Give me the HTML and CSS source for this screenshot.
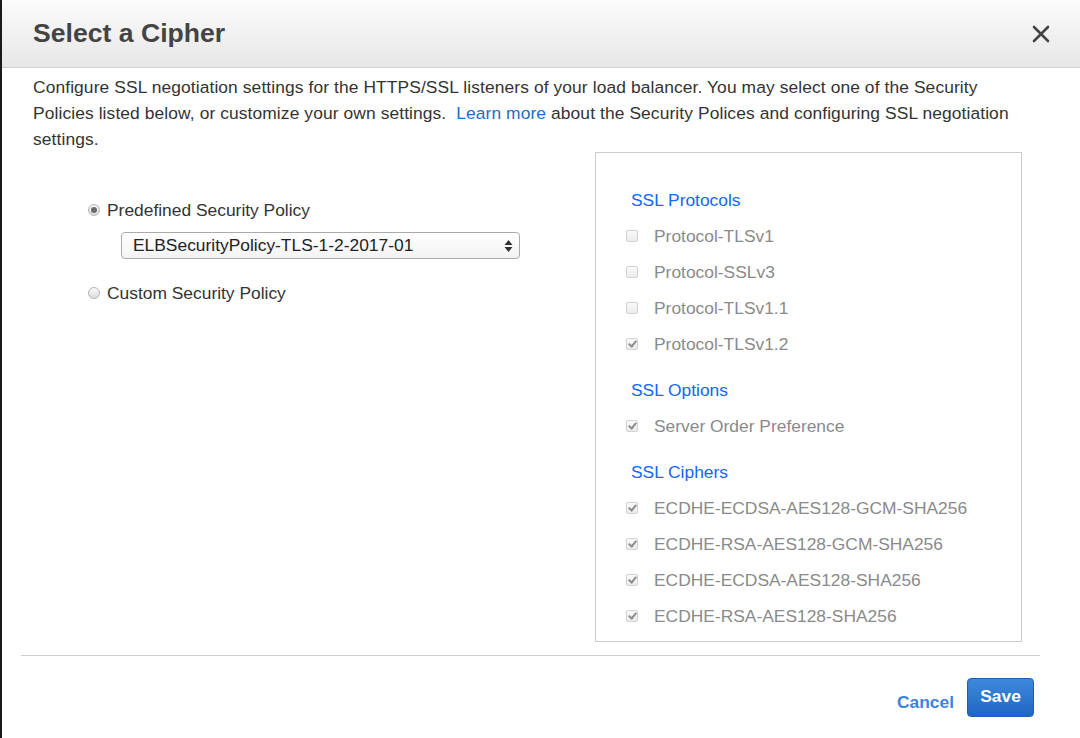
FILE: index.html
```html
<!DOCTYPE html>
<html>
<head>
<meta charset="utf-8">
<link rel="stylesheet" href="styles.css">
</head>
<body>
<div class="modal">
  <header class="modal-header">
    <h1 class="title">Select a Cipher</h1>
    <svg class="close" width="18" height="18" viewBox="0 0 18 18"><path d="M2 2 L16 16 M16 2 L2 16" stroke="#444" stroke-width="2.6" stroke-linecap="round"/></svg>
  </header>
  <div class="modal-body">
    <p class="desc">Configure SSL negotiation settings for the HTTPS/SSL listeners of your load balancer. You may select one of the Security Policies listed below, or customize your own settings.&nbsp; <a class="link">Learn more</a> about the Security Polices and configuring SSL negotiation settings.</p>
    <div class="columns">
      <div class="left">
        <div class="radio-row"><span class="radio checked"></span><span>Predefined Security Policy</span></div>
        <div class="select">
          <span>ELBSecurityPolicy-TLS-1-2-2017-01</span>
          <svg width="9" height="14" viewBox="0 0 9 14"><path d="M4.5 1 L8.5 6 L0.5 6 Z M0.5 8 L8.5 8 L4.5 13 Z" fill="#333"/></svg>
        </div>
        <div class="radio-row custom"><span class="radio"></span><span>Custom Security Policy</span></div>
      </div>
      <div class="panel">
        <div class="heading">SSL Protocols</div>
        <div class="item"><span class="cb"></span>Protocol-TLSv1</div>
        <div class="item"><span class="cb"></span>Protocol-SSLv3</div>
        <div class="item"><span class="cb"></span>Protocol-TLSv1.1</div>
        <div class="item"><span class="cb on"></span>Protocol-TLSv1.2</div>
        <div class="heading">SSL Options</div>
        <div class="item"><span class="cb on"></span>Server Order Preference</div>
        <div class="heading">SSL Ciphers</div>
        <div class="item"><span class="cb on"></span>ECDHE-ECDSA-AES128-GCM-SHA256</div>
        <div class="item"><span class="cb on"></span>ECDHE-RSA-AES128-GCM-SHA256</div>
        <div class="item"><span class="cb on"></span>ECDHE-ECDSA-AES128-SHA256</div>
        <div class="item"><span class="cb on"></span>ECDHE-RSA-AES128-SHA256</div>
      </div>
    </div>
  </div>
  <div class="divider"></div>
  <footer class="modal-footer">
    <a class="cancel">Cancel</a>
    <button class="save">Save</button>
  </footer>
</div>
</body>
</html>
```

FILE: styles.css
```css
* { box-sizing: border-box; }
html, body { margin: 0; padding: 0; background: #fff; }
body {
  font-family: "Liberation Sans", Arial, Helvetica, sans-serif;
  color: #333;
  width: 1080px;
  height: 738px;
  overflow: hidden;
}
.modal {
  height: 738px;
  border-left: 2px solid #1a1a1a;
}
.modal-header {
  height: 68px;
  background: linear-gradient(#fbfbfb, #e7e7e7);
  border-bottom: 1px solid #cfcfcf;
  display: flex;
  align-items: center;
  justify-content: space-between;
  padding: 0 30px 0 31px;
}
.title {
  margin: 0;
  font-size: 26.6px;
  font-weight: bold;
  color: #444;
}
.modal-body { padding: 0 0 0 31px; }
.desc {
  margin: 6px 0 0 0;
  font-size: 17.4px;
  line-height: 26px;
  letter-spacing: 0.1px;
  width: 990px;
  color: #333;
}
.link { color: #1a6ec8; }
.columns {
  display: grid;
  grid-template-columns: 562px 427px;
}
.left {
  padding: 46px 0 0 55px;
  font-size: 17.4px;
  color: #333;
}
.radio-row {
  display: flex;
  align-items: center;
  height: 24px;
  gap: 7px;
}
.radio-row.custom { margin-top: 22px; }
.radio {
  width: 12px;
  height: 12px;
  border-radius: 50%;
  border: 1px solid #b4b4b4;
  background: linear-gradient(#f8f8f8, #dcdcdc);
  display: inline-flex;
  align-items: center;
  justify-content: center;
}
.radio.checked::after {
  content: "";
  width: 6px;
  height: 6px;
  border-radius: 50%;
  background: #6a6a6a;
}
.select {
  margin: 10px 0 0 33px;
  width: 399px;
  height: 27px;
  border: 1px solid #aaa;
  border-radius: 4px;
  background: linear-gradient(#fff, #f3f3f3);
  display: flex;
  align-items: center;
  justify-content: space-between;
  padding: 0 6px 0 11px;
  font-size: 17.4px;
  color: #222;
}
.panel {
  border: 1px solid #ccc;
  height: 490px;
  padding: 19px 0 0 30px;
}
.heading {
  height: 36px;
  line-height: 36px;
  margin-top: 10px;
  padding-left: 5px;
  color: #1466f5;
  font-size: 17.4px;
}
.item {
  height: 36px;
  display: flex;
  align-items: center;
  gap: 16px;
  font-size: 17.4px;
  color: #8a8a8a;
}
.cb {
  width: 12px;
  height: 12px;
  border: 1px solid #d2d2d2;
  border-radius: 2px;
  background: linear-gradient(#fafafa, #ececec);
  position: relative;
  flex: none;
}
.cb.on::after {
  content: "";
  position: absolute;
  left: 3px;
  top: 0px;
  width: 3px;
  height: 6px;
  border: solid #8c8c8c;
  border-width: 0 2px 2px 0;
  transform: rotate(40deg);
}
.divider {
  margin: 13px 40px 0 19px;
  border-top: 1px solid #cfcfcf;
}
.modal-footer {
  display: flex;
  justify-content: flex-end;
  align-items: center;
  gap: 13px;
  padding: 22px 46px 0 0;
}
.cancel {
  color: #3d83d9;
  font-weight: bold;
  font-size: 17.4px;
  margin-top: 10px;
}
.save {
  width: 67px;
  height: 39px;
  border: 1px solid #1b5fb3;
  border-radius: 4px;
  background: linear-gradient(#3f89dc, #1f66c3);
  color: #fff;
  font-family: "Liberation Sans", Arial, sans-serif;
  font-weight: bold;
  font-size: 17.4px;
  padding: 0 0 3px 0;
}
```
